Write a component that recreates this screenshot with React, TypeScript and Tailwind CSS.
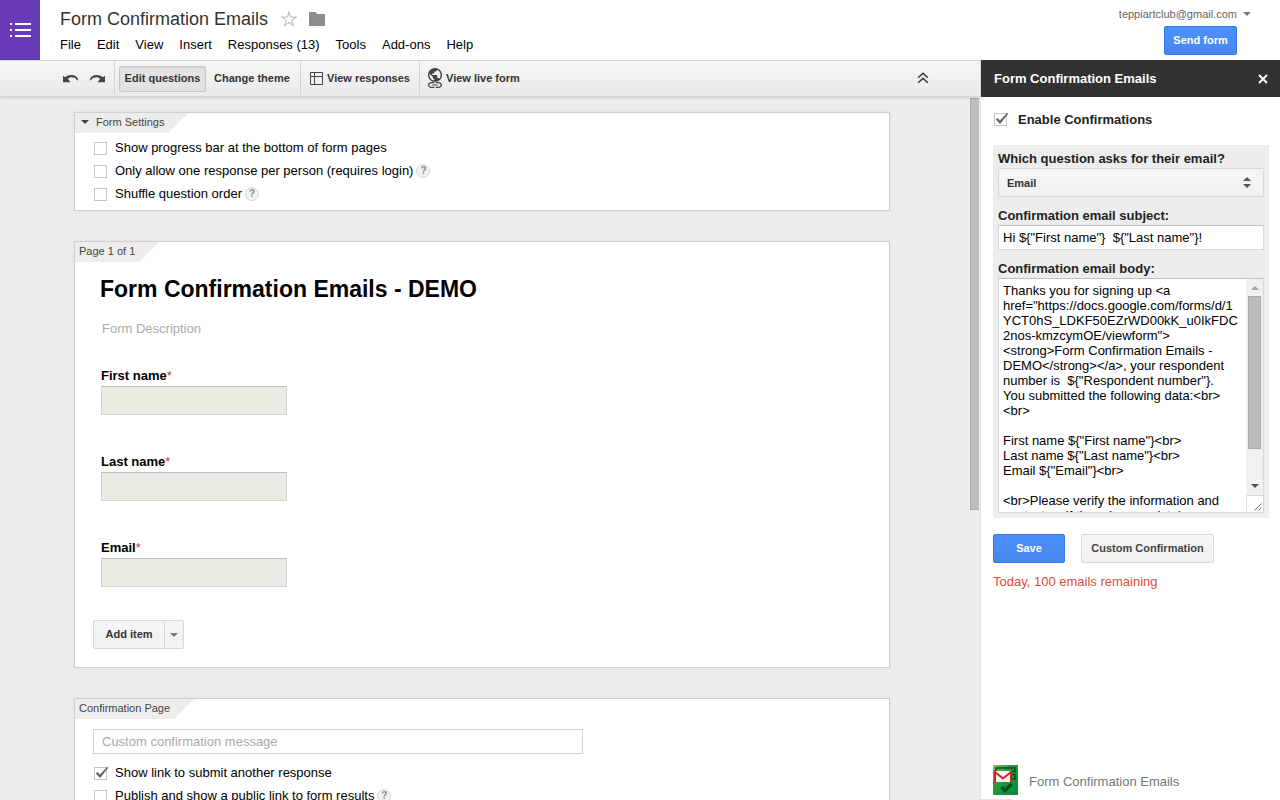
import { useState, type ReactNode } from 'react';

const MENU = ['File', 'Edit', 'View', 'Insert', 'Responses (13)', 'Tools', 'Add-ons', 'Help'];

const FIELDS = ['First name', 'Last name', 'Email'];

const EMAIL_BODY = `Thanks you for signing up <a
href="https://docs.google.com/forms/d/1
YCT0hS_LDKF50EZrWD00kK_u0IkFDC
2nos-kmzcymOE/viewform">
<strong>Form Confirmation Emails -
DEMO</strong></a>, your respondent
number is  \${"Respondent number"}.
You submitted the following data:<br>
<br>

First name \${"First name"}<br>
Last name \${"Last name"}<br>
Email \${"Email"}<br>

<br>Please verify the information and
contact us if there is any mistake.`;

function Caret({ className = '' }: { className?: string }) {
  return (
    <svg width="8" height="4" viewBox="0 0 8 4" className={`shrink-0 ${className}`} aria-hidden="true">
      <path d="M0 0h8L4 4z" fill="currentColor" />
    </svg>
  );
}

interface CheckRowProps {
  id: string;
  label: string;
  checked?: boolean;
  help?: boolean;
}

function CheckBox({ id, checked = false }: { id: string; checked?: boolean }) {
  const [on, setOn] = useState(checked);
  return (
    <span className="relative block size-[13px] shrink-0">
      <input
        id={id}
        type="checkbox"
        checked={on}
        onChange={e => setOn(e.target.checked)}
        className="block size-[13px] appearance-none border border-[#c6c6c6] bg-white"
      />
      {on && (
        <svg
          width="15"
          height="13"
          viewBox="0 0 15 13"
          className="pointer-events-none absolute left-0 top-0 overflow-visible"
          aria-hidden="true"
        >
          <path d="M1.8 6.2l1.9-1.2 2.2 2.6L13 0l1.4.5L6.6 10.4H5.4z" fill="#666" />
        </svg>
      )}
    </span>
  );
}

function CheckRow({ id, label, checked, help }: CheckRowProps) {
  return (
    <div className="flex h-[23px] items-center">
      <div className="pt-[2px]">
        <CheckBox id={id} checked={checked} />
      </div>
      <label htmlFor={id} className="ml-2 whitespace-nowrap text-[13px]">
        {label}
      </label>
      {help && (
        <button
          aria-label="Help"
          className="ml-[3px] flex size-[14px] items-center justify-center rounded-full border border-[#d8d8d8] bg-[#f2f2f2] text-[10px] font-bold text-[#888]"
        >
          ?
        </button>
      )}
    </div>
  );
}

function Card({ tab, children }: { tab: ReactNode; children: ReactNode }) {
  return (
    <section className="border border-[#cfcfcf] bg-white shadow-[0_0_4px_rgba(0,0,0,0.06)]">
      <h2 className="flex h-5 w-fit items-center bg-[#ededed] pb-[2px] pl-1 pr-6 text-[11px] text-[#444] [clip-path:polygon(0_0,100%_0,calc(100%-20px)_100%,0_100%)]">
        {tab}
      </h2>
      {children}
    </section>
  );
}

function Header() {
  return (
    <header className="flex h-[60px] shrink-0 bg-white">
      <a href="#" aria-label="Forms home" className="flex w-10 items-center justify-end bg-[#673ab7] pr-2">
        <svg width="22" height="14" viewBox="0 0 22 14" fill="#fff" aria-hidden="true">
          <path d="M0 0h2v2H0zM5 0h16v2H5zM0 6h2v2H0zM5 6h16v2H5zM0 12h2v2H0zM5 12h16v2H5z" />
        </svg>
      </a>
      <div className="flex flex-1 flex-col pl-5 pt-2">
        <div className="flex h-[22px] items-center">
          <h1 className="whitespace-nowrap text-[18px] text-[#333]">Form Confirmation Emails</h1>
          <button aria-label="Star" className="ml-[13px]">
            <svg width="16" height="16" viewBox="0 0 16 16" aria-hidden="true">
              <path
                d="M8 1.200l1.700 4.900 5.300.1-4.200 3.200 1.500 5L8 11.400l-4.300 3 1.500-5L1 6.200l5.300-.1z"
                fill="none"
                stroke="#c4c4c4"
                strokeWidth="1.200"
              />
            </svg>
          </button>
          <button aria-label="Move to folder" className="ml-3">
            <svg width="16" height="14" viewBox="0 0 16 14" aria-hidden="true">
              <path d="M0 0h6.500l1.500 2h8v12H0z" fill="#8c8c8c" />
            </svg>
          </button>
        </div>
        <nav className="mt-[5px] flex h-5 items-center gap-4 text-[13px] text-black">
          {MENU.map(item => (
            <button key={item} className="whitespace-nowrap">
              {item}
            </button>
          ))}
        </nav>
      </div>
      <div className="flex flex-col items-end pr-[29px] pt-[6px]">
        <button className="flex h-4 items-center gap-[6px] text-[11px] text-[#666]">
          teppiartclub@gmail.com
          <Caret className="text-[#777]" />
        </button>
        <button className="mr-[14px] mt-1 h-[29px] w-[73px] rounded-[2px] border border-[#3079ed] bg-linear-to-b from-[#4d90fe] to-[#4787ed] text-[11px] font-bold text-white">
          Send form
        </button>
      </div>
    </header>
  );
}

function Toolbar() {
  return (
    <div className="z-10 flex h-[37px] shrink-0 items-stretch border-y border-[#d5d5d5] bg-linear-to-b from-[#f6f6f6] to-[#eaeaea] text-[11px] font-bold text-[#333] shadow-[0_1px_3px_rgba(0,0,0,0.12)]">
      <div className="flex w-[115px] items-center justify-end gap-[10px] border-r border-[#d5d5d5] pr-[9px]">
        <button aria-label="Undo">
          <svg width="16" height="8" viewBox="0 0 16 8" fill="#444" aria-hidden="true">
            <path d="M0 .8l2.100 1.500C3.900.8 6 0 8.300 0c3.400 0 6.200 1.800 7 4.900l-1 .6C13 3.300 10.900 2.300 8.600 2.300c-1.500 0-2.700.5-3.700 1.700L7.500 7.300H0z" />
          </svg>
        </button>
        <button aria-label="Redo">
          <svg width="16" height="8" viewBox="0 0 16 8" fill="#444" aria-hidden="true">
            <path d="M16 .8l-2.100 1.500C12.100.8 10 0 7.700 0 4.300 0 1.500 1.800.7 4.900l1 .6C3 3.300 5.100 2.300 7.400 2.300c1.500 0 2.700.5 3.700 1.700L8.500 7.300H16z" />
          </svg>
        </button>
      </div>
      <div className="flex w-[186px] items-center border-r border-[#d5d5d5] pl-1">
        <button className="h-[26px] w-[87px] whitespace-nowrap rounded-[2px] border border-[#c8c8c8] bg-[#e3e3e3] shadow-[inset_0_1px_2px_rgba(0,0,0,0.08)]">
          Edit questions
        </button>
        <button className="ml-2 whitespace-nowrap">Change theme</button>
      </div>
      <div className="flex w-[119px] items-center border-r border-[#d5d5d5] pl-[9px]">
        <button className="flex items-center gap-1 whitespace-nowrap">
          <svg width="13" height="13" viewBox="0 0 13 13" fill="none" stroke="#444" aria-hidden="true">
            <path d="M.5.5h12v12H.5zM4.500.5v12M.5 4.500h12" />
          </svg>
          View responses
        </button>
      </div>
      <div className="flex items-center pl-2">
        <button className="flex items-center gap-1 whitespace-nowrap pb-px">
          <svg width="14" height="20" viewBox="0 0 14 20" fill="#444" aria-hidden="true">
            <svg x="0" y="0" width="14" height="14" viewBox="2 2 20 20">
              <path d="M12 2C6.480 2 2 6.480 2 12s4.480 10 10 10 10-4.480 10-10S17.520 2 12 2zm-1 17.930c-3.950-.49-7-3.850-7-7.930 0-.62.08-1.210.21-1.790L9 15v1c0 1.100.9 2 2 2v1.930zm6.900-2.540c-.26-.81-1-1.390-1.900-1.390h-1v-3c0-.55-.45-1-1-1H8v-2h2c.55 0 1-.45 1-1V7h2c1.100 0 2-.9 2-2v-.41c2.930 1.190 5 4.060 5 7.410 0 2.080-.8 3.970-2.100 5.390z" />
            </svg>
            <svg x="0" y="14" width="14" height="6" viewBox="2 7 20 10" preserveAspectRatio="none">
              <path d="M3.900 12c0-1.710 1.390-3.100 3.100-3.100h4V7H7c-2.760 0-5 2.240-5 5s2.240 5 5 5h4v-1.900H7c-1.710 0-3.100-1.390-3.100-3.100zM8 13h8v-2H8v2zm9-6h-4v1.900h4c1.710 0 3.100 1.390 3.100 3.100s-1.390 3.100-3.100 3.100h-4V17h4c2.760 0 5-2.240 5-5s-2.240-5-5-5z" />
            </svg>
          </svg>
          View live form
        </button>
      </div>
      <button aria-label="Hide menus" className="ml-auto mr-[51px] pb-px">
        <svg width="12" height="12" viewBox="0 0 12 12" fill="none" stroke="#333" strokeWidth="1.500" aria-hidden="true">
          <path d="M1.200 5.800L6 1.200l4.800 4.600M1.200 10.800L6 6.200l4.800 4.600" />
        </svg>
      </button>
    </div>
  );
}

function Canvas() {
  return (
    <div className="flex min-h-0 flex-1 bg-[#ededed]">
      <main className="flex min-w-0 flex-1 flex-col gap-[30px] overflow-hidden pl-[74px] pr-20 pt-[15px]">
        <Card
          tab={
            <span className="flex items-center gap-[7px] pl-[2px]">
              <Caret className="text-[#444]" />
              Form Settings
            </span>
          }
        >
          <div className="pb-[5px] pl-[19px] pt-[3px]">
            <CheckRow id="progress" label="Show progress bar at the bottom of form pages" />
            <CheckRow id="single" label="Only allow one response per person (requires login)" help />
            <CheckRow id="shuffle" label="Shuffle question order" help />
          </div>
        </Card>

        <Card tab="Page 1 of 1">
          <div className="px-[18px] pb-[18px] pt-[13px]">
            <h3 className="pl-[7px] text-[23px] font-bold leading-7 text-black">Form Confirmation Emails - DEMO</h3>
            <p className="mt-4 pl-[9px] text-[13px] leading-5 text-[#aaa]">Form Description</p>
            <div className="mt-[27px] flex flex-col gap-[37px] pl-2">
              {FIELDS.map(field => (
                <div key={field}>
                  <label htmlFor={field} className="block text-[13px] font-bold leading-5 text-black">
                    {field}
                    <span className="font-normal text-[#c43b1d]">*</span>
                  </label>
                  <input
                    id={field}
                    disabled
                    className="block h-[29px] w-[186px] border border-[#d5d5d5] border-t-[#bdbdbd] bg-[#ebebe4]"
                  />
                </div>
              ))}
            </div>
            <div className="mt-[33px] flex h-[29px] w-fit rounded-[2px] border border-[#d9d9d9] bg-linear-to-b from-[#f5f5f5] to-[#f1f1f1] text-[#333]">
              <button className="w-[71px] border-r border-[#d9d9d9] text-[11px] font-bold">Add item</button>
              <button aria-label="Choose item type" className="flex w-[18px] items-center justify-center">
                <Caret className="text-[#777]" />
              </button>
            </div>
          </div>
        </Card>

        <Card tab="Confirmation Page">
          <div className="px-[18px] pb-5 pt-[10px]">
            <input
              aria-label="Custom confirmation message"
              placeholder="Custom confirmation message"
              className="block h-[25px] w-full max-w-[490px] border border-[#d5d5d5] bg-white px-2 text-[13px] placeholder:text-[#aaa]"
            />
            <div className="pl-px pt-[7px]">
              <CheckRow id="another" label="Show link to submit another response" checked />
              <CheckRow id="publish" label="Publish and show a public link to form results" help />
            </div>
          </div>
        </Card>
      </main>
      <div className="w-[10px] shrink-0 pr-px pt-px" aria-hidden="true">
        <div className="h-[412px] border border-r-0 border-[#a8a8a8] bg-[#bdbdbd]" />
      </div>
    </div>
  );
}

function Sidebar() {
  return (
    <aside className="flex w-[300px] shrink-0 flex-col border-l border-[#e3e3e3] bg-white text-[#222]">
      <div className="flex h-[37px] items-center justify-between bg-[#323232] pl-[13px] pr-3 text-white">
        <h2 className="text-[13px] font-bold">Form Confirmation Emails</h2>
        <button aria-label="Close">
          <svg width="10" height="10" viewBox="0 0 10 10" stroke="#fff" strokeWidth="2" aria-hidden="true">
            <path d="M1 1l8 8M9 1L1 9" />
          </svg>
        </button>
      </div>

      <div className="flex flex-1 flex-col pl-3 pr-[11px] pt-[10px]">
        <div className="flex h-6 items-center gap-[11px] pl-px">
          <CheckBox id="enable" checked />
          <label htmlFor="enable" className="pt-px text-[13px] font-bold">
            Enable Confirmations
          </label>
        </div>

        <div className="mt-[14px] bg-[#ededed] px-[5px] pb-[5px] pt-1 text-[13px]">
          <label htmlFor="question" className="block font-bold leading-[19px]">
            Which question asks for their email?
          </label>
          <div className="relative">
            <select
              id="question"
              className="block h-[29px] w-full appearance-none rounded-[2px] border border-[#d9d9d9] bg-linear-to-b from-[#f5f5f5] to-[#f1f1f1] pl-2 pt-px text-[11px] font-bold text-[#333]"
            >
              <option>Email</option>
            </select>
            <svg
              width="8"
              height="11"
              viewBox="0 0 8 11"
              fill="#555"
              className="pointer-events-none absolute right-[13px] top-[9px]"
              aria-hidden="true"
            >
              <path d="M0 4h8L4 0zM0 7h8l-4 4z" />
            </svg>
          </div>

          <label htmlFor="subject" className="mt-[9px] block font-bold leading-[19px]">
            Confirmation email subject:
          </label>
          <input
            id="subject"
            defaultValue={'Hi ${"First name"}  ${"Last name"}!'}
            className="block h-[25px] w-full border border-[#d9d9d9] border-t-[#c0c0c0] bg-white px-1 text-black"
          />

          <label htmlFor="body" className="mt-[9px] block font-bold leading-[19px]">
            Confirmation email body:
          </label>
          <div className="flex h-[235px] border border-[#d9d9d9] border-t-[#c0c0c0] bg-white">
            <textarea
              id="body"
              defaultValue={EMAIL_BODY}
              className="block min-w-0 flex-1 resize-none overflow-hidden whitespace-pre pl-1 pt-1 leading-[15px] text-black outline-none"
            />
            <div className="flex w-[17px] flex-col" aria-hidden="true">
              <div className="flex flex-1 flex-col items-center bg-[#f1f1f1]">
                <Caret className="my-[7px] rotate-180 text-[#a3a3a3]" />
                <div className="mt-[-1px] h-[153px] w-[13px] border border-[#a8a8a8] bg-[#bcbcbc]" />
                <Caret className="mb-[7px] mt-auto text-[#505050]" />
              </div>
              <div className="flex h-[17px] items-end justify-end border-l border-t border-[#d9d9d9] bg-white pb-px pr-px">
                <svg width="8" height="8" viewBox="0 0 8 8" stroke="#777" aria-hidden="true">
                  <path d="M.5 7.500l7-7M4.500 7.500l3-3" />
                </svg>
              </div>
            </div>
          </div>
        </div>

        <div className="mt-4 flex gap-4 text-[11px] font-bold">
          <button className="h-[29px] w-[72px] rounded-[2px] border border-[#3079ed] bg-linear-to-b from-[#4d90fe] to-[#4787ed] text-white">
            Save
          </button>
          <button className="h-[29px] w-[133px] whitespace-nowrap rounded-[2px] border border-[#d9d9d9] bg-linear-to-b from-[#f5f5f5] to-[#f1f1f1] text-[#444]">
            Custom Confirmation
          </button>
        </div>
        <p className="mt-[9px] text-[13px] leading-5 text-[#dd4b39]">Today, 100 emails remaining</p>

        <div className="mb-1 mt-auto flex items-center gap-[11px] text-[13px] text-[#777]">
          <svg width="25" height="30" viewBox="0 0 25 30" aria-hidden="true">
            <defs>
              <linearGradient id="badge" x1="0" y1="0" x2="1" y2="1">
                <stop offset="0" stopColor="#86c650" />
                <stop offset="0.350" stopColor="#2a9a3f" />
                <stop offset="1" stopColor="#068a35" />
              </linearGradient>
            </defs>
            <rect width="25" height="30" rx="1" fill="url(#badge)" />
            <path d="M3 6V3h19v3.500h-4M18 9.500h4v4.500h-4" fill="none" stroke="#0c4a22" strokeWidth="1.500" />
            <path d="M2 6h16v11H2z" fill="#f4f4f4" />
            <path d="M2 17.500V7l8 6.500L18 7v10.500" fill="none" stroke="#dd1f1f" strokeWidth="2" />
            <path d="M8.500 22l3.500 3.500 6.500-6.500" fill="none" stroke="#07501f" strokeWidth="3.500" />
          </svg>
          <span className="pt-[3px]">Form Confirmation Emails</span>
        </div>
      </div>
      <div className="h-px w-8 bg-[#e3e3e3]" />
    </aside>
  );
}

export default function App() {
  return (
    <div className="flex h-screen flex-col overflow-hidden bg-white font-['Liberation_Sans',Arial,sans-serif] text-black">
      <Header />
      <div className="flex min-h-0 flex-1">
        <div className="flex min-w-0 flex-1 flex-col">
          <Toolbar />
          <Canvas />
        </div>
        <Sidebar />
      </div>
    </div>
  );
}
